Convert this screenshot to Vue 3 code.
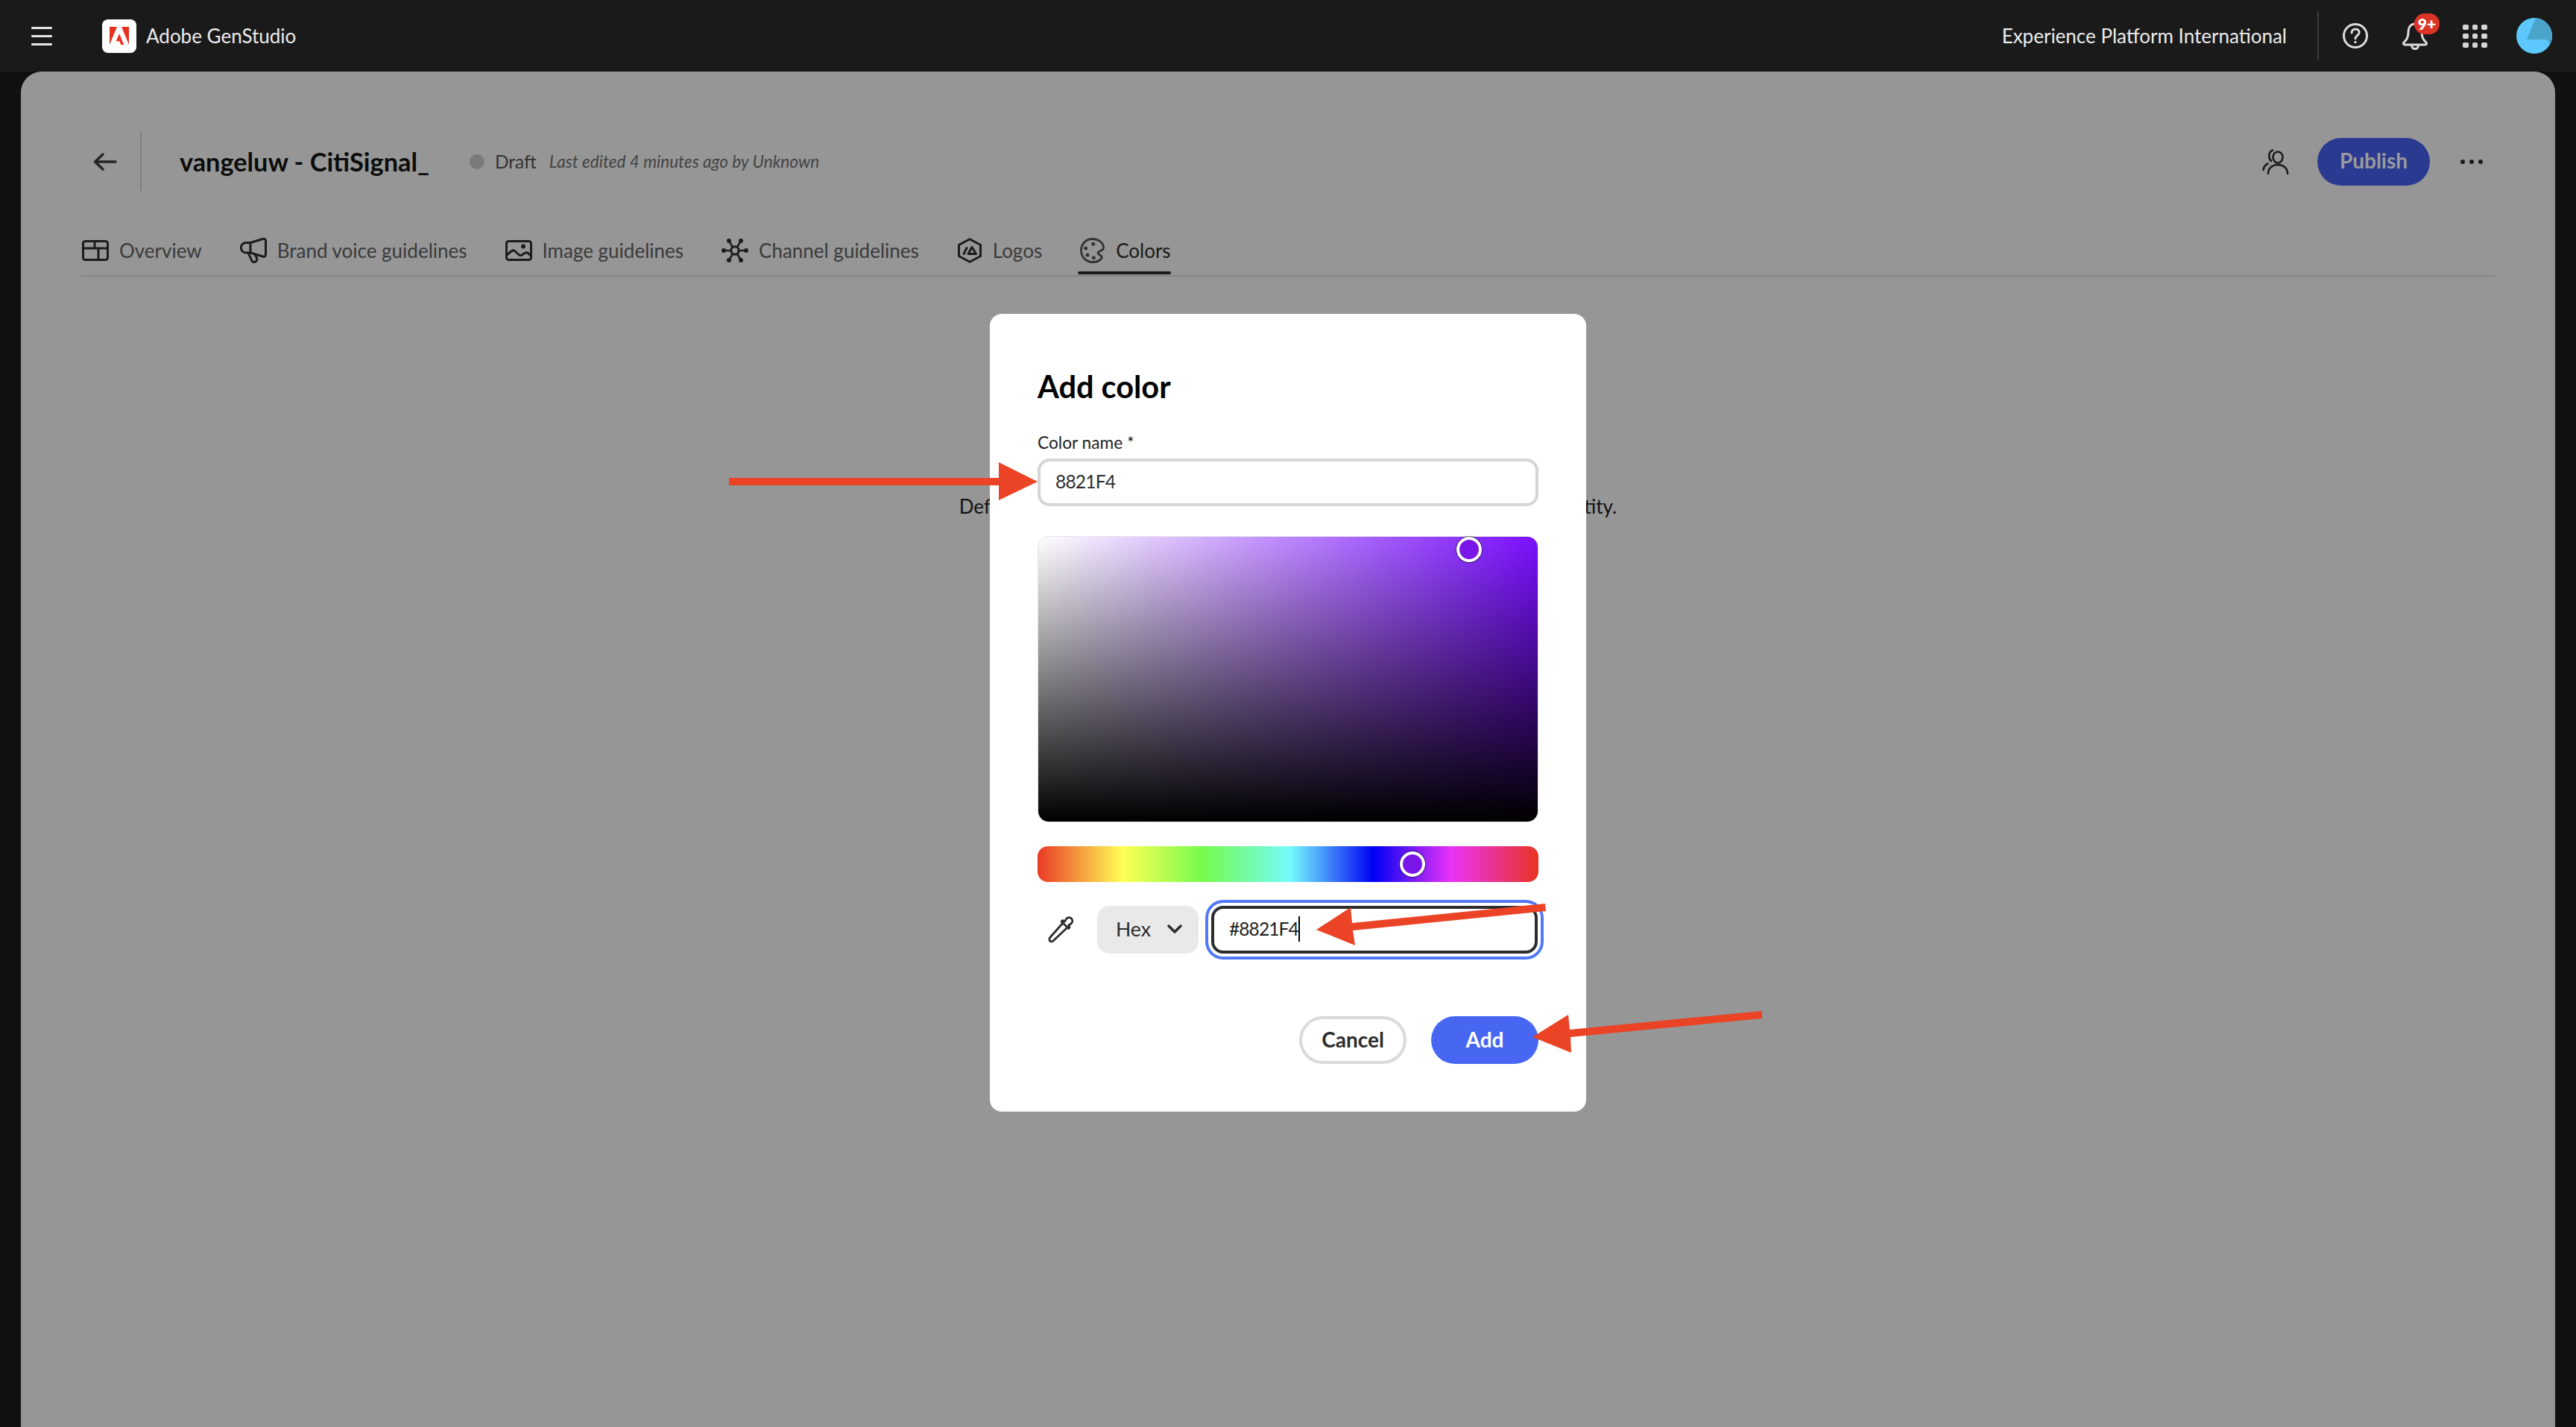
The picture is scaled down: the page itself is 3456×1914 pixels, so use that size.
<script setup>
const gridCells = Array.from({ length: 9 }, (_, i) => i)
</script>

<template>
  <div class="page">
    <header class="topbar">
      <div class="burger"><i></i><i></i><i></i></div>
      <div class="logo">
        <svg width="26" height="24" viewBox="0 0 30 27.5"><path fill="#e8321f" d="M11.5 0H0v27.5zM18.5 0H30v27.5zM15 10.2l7.2 17.3h-4.7l-2.1-5.5H10.1z"/></svg>
      </div>
      <span class="brand">Adobe GenStudio</span>
      <span class="org">Experience Platform International</span>
      <span class="vr"></span>
      <svg class="help" width="36" height="36" viewBox="0 0 36 36" fill="none" stroke="#dcdcdc" stroke-width="3"><circle cx="18" cy="18" r="15.5"/><path stroke-linecap="round" d="M13 14c0-3 2.300-5 5.200-5 3 0 5 2 5 4.500 0 2-1 3-2.700 4.200-1.700 1.200-2.500 2-2.500 4"/><circle cx="18" cy="26.500" r="1.700" fill="#dcdcdc" stroke="none"/></svg>
      <div class="bell">
        <svg width="36" height="38" viewBox="0 0 36 38" fill="none" stroke="#dcdcdc" stroke-width="3" stroke-linejoin="round"><path d="M18 3c-6 0-9 5-9 11 0 7-2 10-6 14-1 1-.5 3 1.500 3h27c2 0 2.500-2 1.500-3-4-4-6-7-6-14 0-6-3-11-9-11z"/><path d="M13.500 31.500c0 3 2 5 4.500 5s4.500-2 4.500-5"/></svg>
        <span class="badge">9+</span>
      </div>
      <div class="apps"><i v-for="c in gridCells" :key="c"></i></div>
      <svg class="avatar" width="48" height="48" viewBox="0 0 48 48"><defs><clipPath id="avc"><circle cx="24" cy="24" r="24"/></clipPath></defs><circle cx="24" cy="24" r="24" fill="#5cc8fd"/><polygon clip-path="url(#avc)" fill="#4aa3c9" points="26,0 14,29 41,29 47,38 56,30 50,0"/></svg>
    </header>

    <main class="card">
      <div class="head">
        <svg class="back" width="32" height="24" viewBox="0 0 32 24" fill="none" stroke="#262626" stroke-width="3.500" stroke-linecap="round" stroke-linejoin="round"><path d="M30 12H3M13 2 2.500 12 13 22"/></svg>
        <span class="head-vr"></span>
        <h1 class="title">vangeluw - CitiSignal_</h1>
        <span class="dot"></span>
        <span class="draft">Draft</span>
        <span class="edited">Last edited 4 minutes ago by Unknown</span>
        <span class="grow"></span>
        <svg class="users" width="36" height="34" viewBox="0 0 36 34" fill="none" stroke="#1c1c1c" stroke-width="2.600" stroke-linecap="round"><ellipse cx="21" cy="11" rx="6.500" ry="7.500"/><path d="M8 33c0-8 6-12 13-12s13 4 13 12"/><path d="M12 16C8 12 8 4 14 1.500M1.500 28c.5-4 3-7 6-8.500"/></svg>
        <button class="publish">Publish</button>
        <div class="more"><i></i><i></i><i></i></div>
      </div>

      <nav class="tabs">
        <div class="tab">
          <svg width="36" height="28" viewBox="0 0 36 28" fill="none" stroke="#1c1c1c" stroke-width="3"><rect x="1.500" y="1.500" width="33" height="25" rx="3"/><path d="M1.500 11h33M17 1.500V11M22 11v15.500"/></svg>
          <span>Overview</span>
        </div>
        <div class="tab">
          <svg width="36" height="34" viewBox="0 0 36 34" fill="none" stroke="#1c1c1c" stroke-width="3" stroke-linejoin="round"><path d="M14 6.500H8a6.700 6.700 0 0 0 0 13.500h6l16.500 5c3 .8 4-.8 4-3V4.500c0-2.500-1.500-3.700-4-3zM14 6.500V20"/><path d="M11 20l4.500 10c1 2.300 3 3 5 2.200s3-2.700 2-5l-2.500-5"/></svg>
          <span>Brand voice guidelines</span>
        </div>
        <div class="tab">
          <svg width="36" height="28" viewBox="0 0 36 28" fill="none" stroke="#1c1c1c" stroke-width="3" stroke-linejoin="round"><rect x="1.500" y="1.500" width="33" height="25" rx="3"/><circle cx="24" cy="8.500" r="3" fill="#1c1c1c" stroke="none"/><path d="M2 20l6-5c2-1.500 3.500-1.500 5 0l5 4.500c2 1.500 3.500 1.200 5 0l2.500-1.800c2-1.300 3.500-1.300 5 0l4 3"/></svg>
          <span>Image guidelines</span>
        </div>
        <div class="tab">
          <svg width="36" height="32" viewBox="0 0 36 32" fill="#1c1c1c" stroke="#1c1c1c" stroke-width="2.600"><path d="M3 16h10M23 16h10M10 3l5 8.500M26 3l-5 8.500M10 29l5-8.500M26 29l-5-8.500"/><circle cx="18" cy="16" r="5.200" fill="none" stroke-width="3"/><g stroke="none"><circle cx="3" cy="16" r="3"/><circle cx="33" cy="16" r="3"/><circle cx="10" cy="3" r="3"/><circle cx="26" cy="3" r="3"/><circle cx="10" cy="29" r="3"/><circle cx="26" cy="29" r="3"/></g></svg>
          <span>Channel guidelines</span>
        </div>
        <div class="tab">
          <svg width="34" height="34" viewBox="0 0 34 34" fill="none" stroke="#1c1c1c" stroke-width="3" stroke-linejoin="round" stroke-linecap="round"><polygon points="17,1.800 31.500,9.500 31.500,24.500 17,32.200 2.500,24.500 2.500,9.500"/><path d="M9 21.500l4-8"/><polygon points="20,12.500 25.500,21.500 15,21.500"/></svg>
          <span>Logos</span>
        </div>
        <div class="tab active">
          <svg width="34" height="34" viewBox="0 0 34 34" fill="none" stroke="#333" stroke-width="2.800"><path d="M16.500 1.500C25 1.500 31.500 7 31.500 13c0 5-6.500 4-7.500 7-1 3 7 3 5 7-2 4-8 5.500-12.500 5.500C8 32.500 1.500 25.500 1.500 17S8 1.500 16.500 1.500z"/><g fill="#333" stroke="none"><circle cx="17.700" cy="8.300" r="2.500"/><circle cx="7.700" cy="14" r="2.500"/><circle cx="10" cy="23" r="2.500"/><circle cx="18.300" cy="26.700" r="2.500"/></g></svg>
          <span>Colors</span>
        </div>
      </nav>

      <p class="empty">Define the colors that represent your brand to keep a cohesive brand identity.</p>
    </main>

    <section class="modal">
      <h2 class="modal-title">Add color</h2>
      <label class="field-label">Color name *</label>
      <div class="name-input">8821F4</div>
      <div class="sv">
        <span class="handle sv-handle"></span>
      </div>
      <div class="hue">
        <span class="handle hue-handle"></span>
      </div>
      <div class="hex-row">
        <div class="dropper">
          <svg width="36" height="36" viewBox="0 0 36 36" fill="none" stroke="#2c2c2c" stroke-width="2.800" stroke-linejoin="round"><path d="M20 9 3.500 27.500c-1.500 1.700-2 4-1 5.500s3.500 1.200 5-.5L26 15"/><path d="M18 7l1.500-1.500 3 1.500 2-3.500c1.500-2 5-2.500 7-.5s1.500 5.500-.5 7L27.500 12l1.500 3L27.500 16.500z" fill="#fff"/></svg>
        </div>
        <div class="hex-select">
          <span>Hex</span>
          <svg width="20" height="12" viewBox="0 0 20 12" fill="none" stroke="#2c2c2c" stroke-width="3.400" stroke-linecap="round" stroke-linejoin="round"><path d="M2 2l8 8 8-8"/></svg>
        </div>
        <div class="hex-input"><span class="hex-value">#8821F4</span><span class="caret"></span></div>
      </div>
      <div class="actions">
        <button class="cancel">Cancel</button>
        <button class="add">Add</button>
      </div>
    </section>

    <svg class="arrows" width="3456" height="1914" viewBox="0 0 3456 1914" fill="#eb4326">
      <polygon points="978,641 1340,641 1340,620 1392,646 1340,671 1340,651 978,651"/>
      <polygon points="2073,1212 2074,1222 1815,1248 1818,1268 1766,1247 1812,1217 1814,1238"/>
      <polygon points="2364,1356 2364,1366 2107,1391 2108,1412 2056,1391 2104,1361 2106,1381"/>
    </svg>
  </div>
</template>

<style>
html, body { margin: 0; padding: 0; background: #101010; }
</style>

<style scoped>
.page {
  position: relative;
  width: 3456px;
  height: 1914px;
  overflow: hidden;
  background: #101010;
  display: flex;
  flex-direction: column;
  font-family: "Lato", "Open Sans", sans-serif;
  color: #3a3a3a;
}
.topbar {
  flex: none;
  height: 96px;
  background: #1a1a1a;
  display: flex;
  align-items: center;
  padding: 0 32px 0 42px;
  box-sizing: border-box;
  color: #ececec;
}
.burger { width: 28px; display: flex; flex-direction: column; gap: 8px; }
.burger i { display: block; height: 3px; background: #e6e6e6; border-radius: 1px; }
.logo {
  width: 46px; height: 45px; margin-left: 67px;
  background: #fff; border-radius: 8px;
  display: flex; align-items: center; justify-content: center;
}
.brand { margin-left: 13px; font-size: 26px; }
.org { margin-left: auto; font-size: 26px; }
.vr { width: 2px; height: 66px; background: #3a3a3a; margin: 0 31px 0 41px; }
.help { flex: none; }
.bell { position: relative; width: 36px; height: 38px; margin-left: 44px; }
.badge {
  position: absolute; left: 17px; top: -11px;
  width: 34px; height: 28px; border-radius: 14px;
  background: #dc3326; color: #fff;
  font-size: 21px; font-weight: 800; line-height: 27px; text-align: center;
}
.apps {
  width: 32px; margin-left: 46px;
  display: grid; grid-template-columns: repeat(3, 7px); gap: 5px 5.500px;
}
.apps i { display: block; width: 7.500px; height: 7px; background: #d5d5d5; border-radius: 2px; }
.avatar { margin-left: 40px; flex: none; }

.card {
  flex: 1;
  margin: 0 28px;
  padding: 81px 80px 0;
  background: #969696;
  border-radius: 28px 28px 0 0;
}
.head { display: flex; align-items: center; height: 79px; padding: 0 17px; }
.back { flex: none; }
.head-vr { width: 2px; height: 79px; background: #808080; margin-left: 31px; }
.title { margin: 0 0 0 51px; font-size: 34.300px; font-weight: 700; color: #0c0c0c; }
.dot { width: 20px; height: 20px; border-radius: 50%; background: #7a7a7a; margin-left: 54px; }
.draft { margin-left: 14px; font-size: 24.500px; color: #333; }
.edited { margin-left: 17px; font-size: 22.600px; font-style: italic; color: #444; }
.grow { flex: 1; }
.users { flex: none; }
.publish {
  width: 151px; height: 64px; margin-left: 38px; padding: 0 0 3px;
  border: 0; border-radius: 32px;
  background: #2b3a91; color: #9a9a9a;
  font: inherit; font-size: 28px; font-weight: 700;
}
.more { display: flex; gap: 6px; margin-left: 41px; width: 30px; }
.more i { width: 6px; height: 6px; border-radius: 50%; background: #1c1c1c; display: block; }

.tabs {
  display: flex;
  height: 66px;
  margin-top: 47px;
  padding-left: 2px;
  gap: 51px;
  border-bottom: 2px solid #858585;
}
.tab { position: relative; display: flex; align-items: center; gap: 14px; height: 66px; font-size: 26px; }
.tab svg { flex: none; }
.tab.active { color: #1a1a1a; }
.tab.active::after {
  content: "";
  position: absolute;
  left: -3px; right: 0; bottom: 1px;
  height: 4px;
  border-radius: 2px;
  background: #1a1a1a;
}
.empty {
  margin: 288px 0 0;
  text-align: center;
  font-size: 26px;
  line-height: 40px;
  color: #111;
}

.modal {
  position: absolute;
  left: 1328px;
  top: 421px;
  width: 800px;
  box-sizing: border-box;
  padding: 64px;
  background: #fff;
  border-radius: 16px;
  color: #2c2c2c;
}
.modal-title {
  margin: 5px 0 0;
  height: 56px;
  line-height: 56px;
  font-size: 41.500px;
  font-weight: 700;
  color: #000;
}
.field-label { display: block; margin-top: 32px; height: 37px; line-height: 32px; font-size: 22.700px; color: #222; }
.name-input {
  height: 64px; box-sizing: border-box;
  border: 4px solid #d5d5d5; border-radius: 16px;
  padding-left: 20px;
  line-height: 54px; font-size: 24.500px; letter-spacing: -0.8px;
}
.sv {
  position: relative;
  margin: 41px 1px 0;
  height: 382px;
  border-radius: 14px;
  box-shadow: 0 0 0 1px #e4e4e4;
  background:
    linear-gradient(to top, #000, rgba(0,0,0,0)),
    linear-gradient(to right, #fff, #7a10ff);
}
.handle {
  position: absolute;
  width: 34px; height: 34px; box-sizing: border-box;
  border-radius: 50%;
  border: 4px solid #fff;
  background: #7a16e8;
  box-shadow: 0 0 0 1px rgba(0,0,0,.55);
  transform: translate(-50%, -50%);
}
.sv-handle { left: 578px; top: 17px; }
.hue {
  position: relative;
  margin-top: 33px;
  height: 48px;
  border-radius: 14px;
  background: linear-gradient(to right, #e93a27 0%, #ffff55 17%, #75fb4c 33%, #75fbfd 50.500%, #0000f5 67%, #ea33f7 82.600%, #e93323 100%);
}
.hue-handle { left: 503px; top: 24px; }
.hex-row { display: flex; align-items: center; margin-top: 32px; height: 64px; }
.dropper { width: 80px; padding-left: 14px; box-sizing: border-box; display: flex; }
.hex-select {
  width: 136px; height: 64px; box-sizing: border-box;
  background: #e9e9e9; border-radius: 16px;
  display: flex; align-items: center; justify-content: space-between;
  padding: 0 22px 2px 25px;
  font-size: 26.500px;
}
.hex-input {
  width: 438px; height: 64px; box-sizing: border-box;
  margin-left: 17px;
  border: 4px solid #2c2c2c; border-radius: 16px;
  box-shadow: 0 0 0 4px #fff, 0 0 0 8px #5078f8;
  padding-left: 20px;
  display: flex; align-items: center;
  font-size: 24.500px; letter-spacing: -0.9px; color: #222;
}
.hex-value { padding-bottom: 3px; }
.caret { width: 2px; height: 34px; background: #000; margin-bottom: 2px; }
.actions { display: flex; justify-content: flex-end; gap: 33px; margin-top: 84px; }
.cancel, .add {
  width: 144px; height: 64px; box-sizing: border-box; padding: 0 0 2px;
  border-radius: 32px;
  font: inherit; font-size: 28px; font-weight: 700;
}
.cancel { background: #fff; border: 4px solid #dadada; color: #2c2c2c; }
.add { background: #4767f2; border: 0; color: #fff; }
.arrows { position: absolute; left: 0; top: 0; pointer-events: none; }
</style>
